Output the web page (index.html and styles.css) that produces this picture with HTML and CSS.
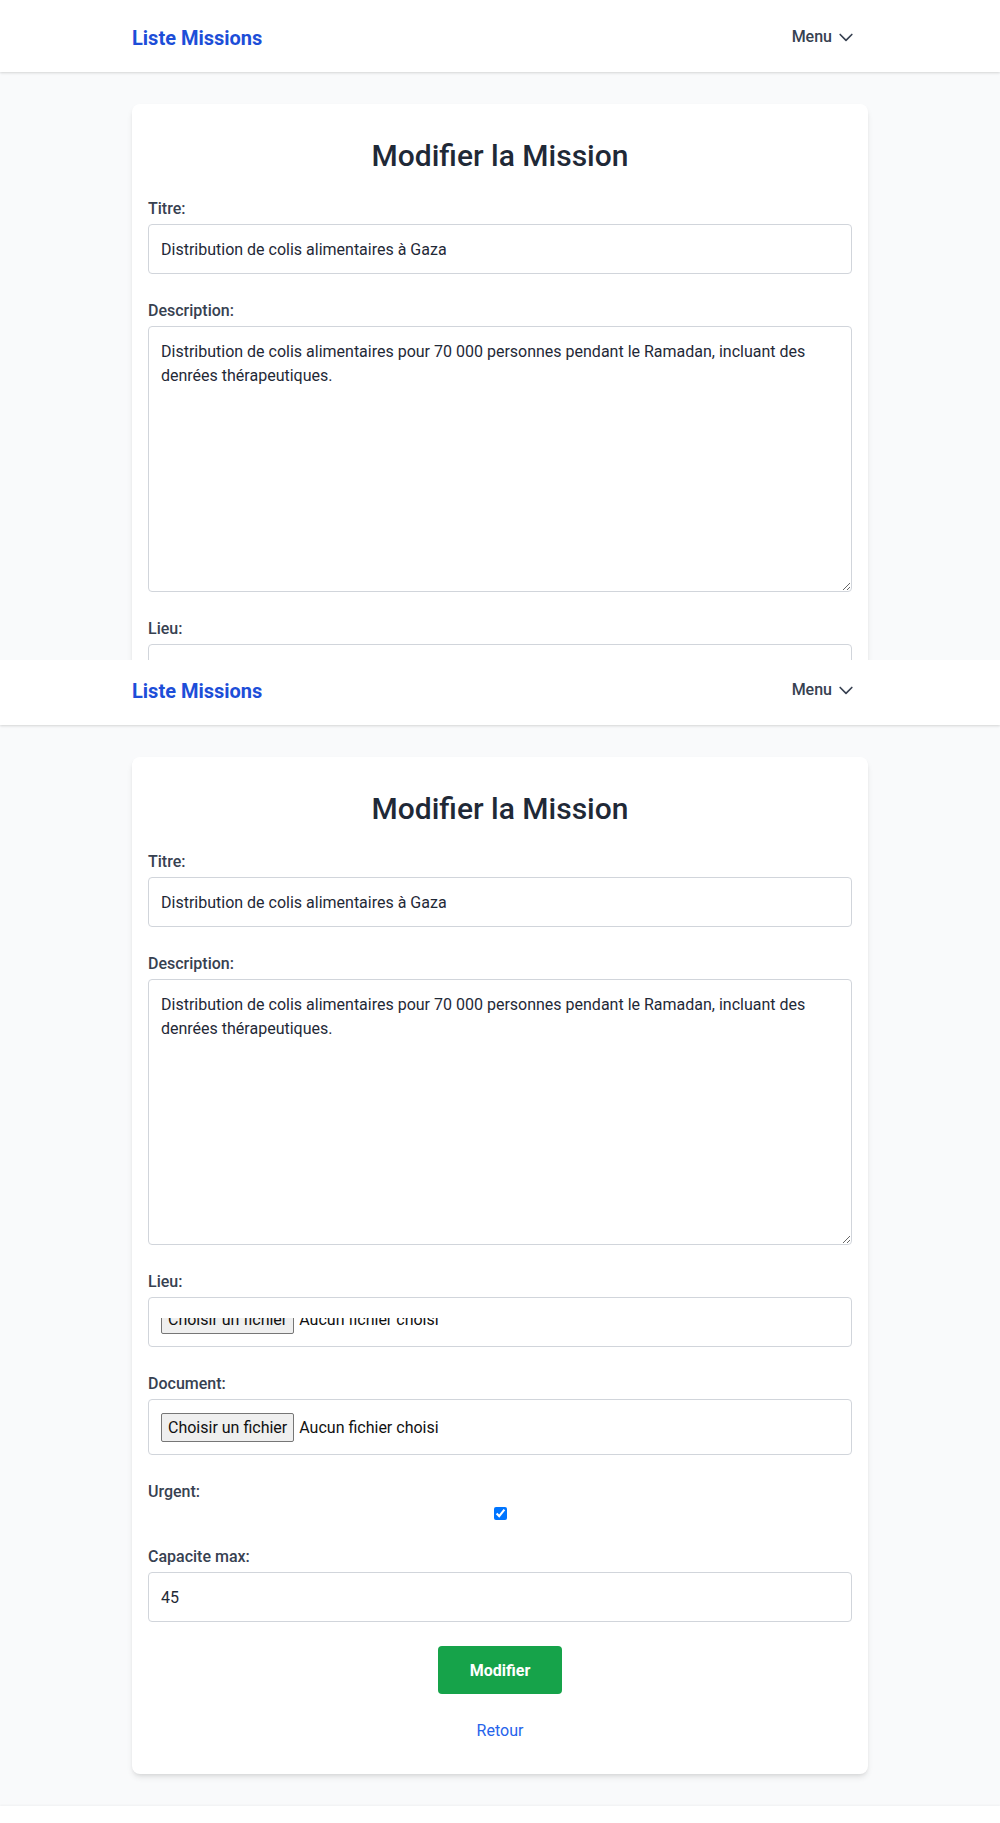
FILE: index.html
```html
<!DOCTYPE html>
<html lang="fr">
<head>
<meta charset="utf-8">
<title>Modifier la Mission</title>
<link rel="stylesheet" href="styles.css">
</head>
<body>
<div class="shot shot-top">
  <div class="page">
    <header class="navbar">
      <div class="container navbar-inner">
        <a class="brand" href="#">Liste Missions</a>
        <button class="menu-btn" type="button">Menu <svg class="menu-icon" viewBox="0 0 24 24"><path d="M19 9l-7 7-7-7"/></svg></button>
      </div>
    </header>
    <main class="container main">
      <div class="card">
        <h1 class="card-title">Modifier la Mission</h1>
        <form class="form">
          <div class="field"><label class="label">Titre:</label><input class="control" type="text" value="Distribution de colis alimentaires à Gaza"></div>
          <div class="field"><label class="label">Description:</label><textarea class="control control-area">Distribution de colis alimentaires pour 70 000 personnes pendant le Ramadan, incluant des denrées thérapeutiques.</textarea></div>
          <div class="field"><label class="label">Lieu:</label><div class="control file file-clipped"><div class="file-clip"><span class="file-btn">Choisir un fichier</span><span class="file-name">Aucun fichier choisi</span></div></div></div>
          <div class="field"><label class="label">Document:</label><div class="control file"><span class="file-btn">Choisir un fichier</span><span class="file-name">Aucun fichier choisi</span></div></div>
          <div class="field"><label class="label">Urgent:</label><input class="check" type="checkbox" checked></div>
          <div class="field"><label class="label">Capacite max:</label><input class="control" type="number" value="45"></div>
          <div class="actions"><button class="btn-submit" type="button">Modifier</button></div>
          <div class="back"><a class="back-link" href="#">Retour</a></div>
        </form>
      </div>
    </main>
    <footer class="footer"></footer>
  </div>
</div>
<div class="shot shot-rest">
  <div class="page page-scrolled">
    <header class="navbar">
      <div class="container navbar-inner">
        <a class="brand" href="#">Liste Missions</a>
        <button class="menu-btn" type="button">Menu <svg class="menu-icon" viewBox="0 0 24 24"><path d="M19 9l-7 7-7-7"/></svg></button>
      </div>
    </header>
    <main class="container main">
      <div class="card">
        <h1 class="card-title">Modifier la Mission</h1>
        <form class="form">
          <div class="field"><label class="label">Titre:</label><input class="control" type="text" value="Distribution de colis alimentaires à Gaza"></div>
          <div class="field"><label class="label">Description:</label><textarea class="control control-area">Distribution de colis alimentaires pour 70 000 personnes pendant le Ramadan, incluant des denrées thérapeutiques.</textarea></div>
          <div class="field"><label class="label">Lieu:</label><div class="control file file-clipped"><div class="file-clip"><span class="file-btn">Choisir un fichier</span><span class="file-name">Aucun fichier choisi</span></div></div></div>
          <div class="field"><label class="label">Document:</label><div class="control file"><span class="file-btn">Choisir un fichier</span><span class="file-name">Aucun fichier choisi</span></div></div>
          <div class="field"><label class="label">Urgent:</label><input class="check" type="checkbox" checked></div>
          <div class="field"><label class="label">Capacite max:</label><input class="control" type="number" value="45"></div>
          <div class="actions"><button class="btn-submit" type="button">Modifier</button></div>
          <div class="back"><a class="back-link" href="#">Retour</a></div>
        </form>
      </div>
    </main>
    <footer class="footer"></footer>
  </div>
</div>
</body>
</html>
```

FILE: styles.css
```css
*, *::before, *::after { box-sizing: border-box; }

body {
  margin: 0;
  background: #f9fafb;
  font-family: Roboto, "Liberation Sans", sans-serif;
  color: #1f2937;
}

.shot-top { height: 660px; overflow: hidden; }
.shot-rest { overflow: hidden; }
.page { background: #f9fafb; }
.page-scrolled { margin-top: -7px; }

.container {
  max-width: 768px;
  margin: 0 auto;
  padding: 0 16px;
}

.navbar {
  background: #fff;
  box-shadow: 0 1px 3px rgba(0, 0, 0, 0.1), 0 1px 2px rgba(0, 0, 0, 0.06);
}

.navbar-inner {
  height: 72px;
  display: flex;
  align-items: center;
  justify-content: space-between;
}

.brand {
  padding-top: 3px;
  font-size: 20px;
  line-height: 28px;
  font-weight: 700;
  color: #1d4ed8;
  text-decoration: none;
}

.menu-btn {
  display: flex;
  align-items: center;
  gap: 4px;
  padding: 2px 12px 0;
  background: none;
  border: 0;
  font-family: Roboto, "Liberation Sans", sans-serif;
  font-size: 16px;
  line-height: 24px;
  font-weight: 500;
  color: #374151;
}

.menu-icon {
  width: 20px;
  height: 20px;
  fill: none;
  stroke: currentColor;
  stroke-width: 2;
  stroke-linecap: round;
  stroke-linejoin: round;
}

.main { padding-top: 32px; padding-bottom: 32px; }

.card {
  background: #fff;
  border-radius: 8px;
  box-shadow: 0 4px 6px -1px rgba(0, 0, 0, 0.1), 0 2px 4px -2px rgba(0, 0, 0, 0.1);
  padding: 32px 16px 31px;
}

.card-title {
  margin: 0 0 22px;
  padding-top: 2px;
  text-align: center;
  font-size: 30px;
  line-height: 36px;
  font-weight: 500;
  color: #1f2937;
}

.form { margin: 0; }

.field { margin-bottom: 24px; }

.label {
  display: block;
  padding-top: 1px;
  margin-bottom: 3px;
  font-size: 16px;
  line-height: 24px;
  font-weight: 500;
  color: #374151;
}

.control {
  display: block;
  width: 100%;
  padding: 13px 12px 11px;
  border: 1px solid #d1d5db;
  border-radius: 4px;
  background: #fff;
  font-family: Roboto, "Liberation Sans", sans-serif;
  font-size: 16px;
  line-height: 24px;
  color: #1f2937;
  outline: none;
}

.control-area { height: 266px; resize: both; }

.file {
  display: flex;
  align-items: center;
  padding: 12px;
  color: #111;
}

.file-clipped {
  padding: 20px 12px 12px;
  height: 50px;
}

.file-clip {
  height: 16px;
  width: 100%;
  overflow: hidden;
  display: flex;
  align-items: flex-end;
}

.file-btn {
  display: inline-flex;
  align-items: center;
  flex: none;
  height: 29px;
  padding: 1px 6px 0;
  margin-right: 5px;
  background: #efefef;
  border: 1px solid #767676;
  border-radius: 2px;
  color: #111;
  white-space: nowrap;
}

.file-name {
  flex: none;
  padding-top: 1px;
  line-height: 29px;
  white-space: nowrap;
  color: #111;
}

.check {
  display: block;
  width: 13px;
  height: 13px;
  margin: 1px auto 0;
}

.actions { text-align: center; }

.btn-submit {
  height: 48px;
  padding: 1px 32px 0;
  background: #16a34a;
  color: #fff;
  border: 0;
  border-radius: 4px;
  font-family: Roboto, "Liberation Sans", sans-serif;
  font-size: 16px;
  line-height: 24px;
  font-weight: 700;
}

.back {
  margin-top: 25px;
  text-align: center;
  line-height: 24px;
  font-size: 16px;
}

.back-link {
  color: #2563eb;
  text-decoration: none;
}

.footer {
  height: 80px;
  background: #fff;
  box-shadow: 0 -1px 2px rgba(0, 0, 0, 0.04);
}
```
